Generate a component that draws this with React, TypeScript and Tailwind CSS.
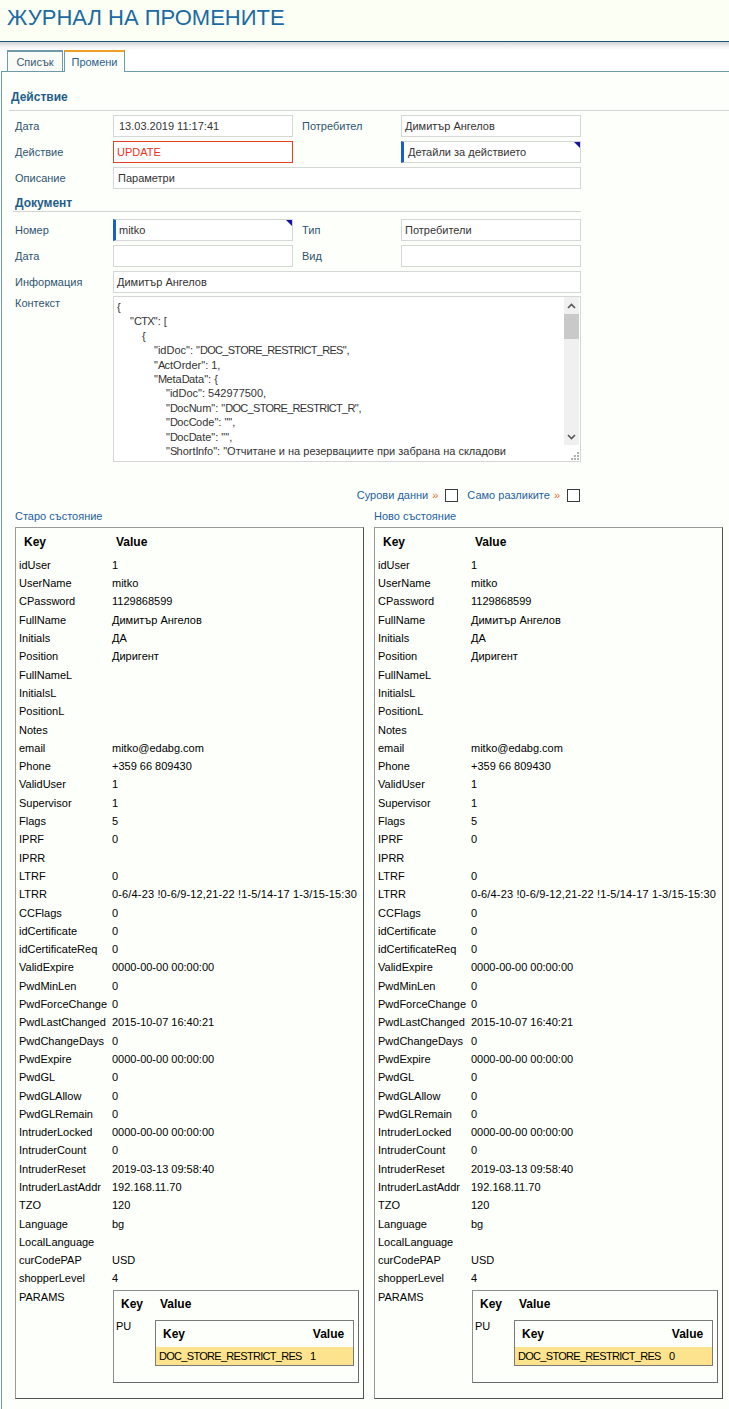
import React from 'react';

const rows: [string, string][] = [
  ['idUser', '1'],
  ['UserName', 'mitko'],
  ['CPassword', '1129868599'],
  ['FullName', 'Димитър Ангелов'],
  ['Initials', 'ДА'],
  ['Position', 'Диригент'],
  ['FullNameL', ''],
  ['InitialsL', ''],
  ['PositionL', ''],
  ['Notes', ''],
  ['email', 'mitko@edabg.com'],
  ['Phone', '+359 66 809430'],
  ['ValidUser', '1'],
  ['Supervisor', '1'],
  ['Flags', '5'],
  ['IPRF', '0'],
  ['IPRR', ''],
  ['LTRF', '0'],
  ['LTRR', '0-6/4-23 !0-6/9-12,21-22 !1-5/14-17 1-3/15-15:30'],
  ['CCFlags', '0'],
  ['idCertificate', '0'],
  ['idCertificateReq', '0'],
  ['ValidExpire', '0000-00-00 00:00:00'],
  ['PwdMinLen', '0'],
  ['PwdForceChange', '0'],
  ['PwdLastChanged', '2015-10-07 16:40:21'],
  ['PwdChangeDays', '0'],
  ['PwdExpire', '0000-00-00 00:00:00'],
  ['PwdGL', '0'],
  ['PwdGLAllow', '0'],
  ['PwdGLRemain', '0'],
  ['IntruderLocked', '0000-00-00 00:00:00'],
  ['IntruderCount', '0'],
  ['IntruderReset', '2019-03-13 09:58:40'],
  ['IntruderLastAddr', '192.168.11.70'],
  ['TZO', '120'],
  ['Language', 'bg'],
  ['LocalLanguage', ''],
  ['curCodePAP', 'USD'],
  ['shopperLevel', '4'],
];

function Caps({ children }: { children: React.ReactNode }) {
  return <span className="tracking-[-0.7px]">{children}</span>;
}

const jsonLines: [number, React.ReactNode][] = [
  [0, '{'],
  [1, <>"<Caps>CTX</Caps>": [</>],
  [2, '{'],
  [3, <>"idDoc": "<Caps>DOC_STORE_RESTRICT_RES</Caps>",</>],
  [3, <>"<Caps>A</Caps>ctOrder": 1,</>],
  [3, <>"<Caps>M</Caps>eta<Caps>D</Caps>ata": {'{'}</>],
  [4, '"idDoc": 542977500,'],
  [4, <>"<Caps>D</Caps>oc<Caps>N</Caps>um": "<Caps>DOC_STORE_RESTRICT_R</Caps>",</>],
  [4, <>"<Caps>D</Caps>oc<Caps>C</Caps>ode": "",</>],
  [4, <>"<Caps>D</Caps>oc<Caps>D</Caps>ate": "",</>],
  [4, <>"<Caps>S</Caps>hort<Caps>I</Caps>nfo": "Отчитане и на резервациите при забрана на складови</>],
];

const indentCls = ['pl-[0px]', 'pl-[13px]', 'pl-[25px]', 'pl-[37px]', 'pl-[49px]'];

function Corner() {
  return (
    <span className="absolute right-0 top-0 h-0 w-0 border-l-[6px] border-t-[6px] border-l-transparent border-t-[#1414a0]" />
  );
}

function KVBox({ val }: { val: string }) {
  return (
    <div className="border border-[#9a9a9a] border-b-[#505050] border-r-[#505050] bg-[#fdfffa] pb-[15px] text-[11px] text-black">
      <div className="flex h-[28px] items-center text-[12px] font-bold">
        <div className="w-[96px] shrink-0 pl-[8px]">Key</div>
        <div className="pl-[4px]">Value</div>
      </div>
      {rows.map(([k, v]) => (
        <div key={k} className="flex h-[18.3px] items-center">
          <div className="w-[96px] shrink-0 pl-[3px]">{k}</div>
          <div className={`whitespace-nowrap ${k === 'LTRR' ? 'tracking-[0.15px]' : ''}`}>{v}</div>
        </div>
      ))}
      <div className="flex">
        <div className="w-[96px] shrink-0 pl-[3px] leading-[18.3px]">PARAMS</div>
        <div className="ml-[1px] mr-[4px] mt-[2px] flex-1 border border-[#8c8c8c] border-b-[#6a6a6a] border-r-[#6a6a6a] pb-[16px]">
          <div className="flex h-[27px] items-center text-[12px] font-bold">
            <div className="w-[41px] shrink-0 pl-[7px]">Key</div>
            <div className="pl-[5px]">Value</div>
          </div>
          <div className="flex">
            <div className="w-[41px] shrink-0 pl-[2px] leading-[16px]">PU</div>
            <div className="mr-[4px] mt-[2px] flex-1 border border-[#7a7a7a]">
              <div className="flex h-[26px] items-center text-[12px] font-bold">
                <div className="w-[150px] shrink-0 pl-[7px]">Key</div>
                <div className="flex-1 pr-[2px] text-center">Value</div>
              </div>
              <div className="flex h-[18px] items-center bg-[#fde38e]">
                <div className="w-[150px] shrink-0 whitespace-nowrap pl-[3px] tracking-[-0.7px]">DOC_STORE_RESTRICT_RES</div>
                <div className="pl-[4px]">{val}</div>
              </div>
            </div>
          </div>
        </div>
      </div>
    </div>
  );
}

function Chevron({ up }: { up?: boolean }) {
  return (
    <svg width="9" height="6" viewBox="0 0 9 6" className="block">
      <path
        d={up ? 'M1 5 L4.5 1.5 L8 5' : 'M1 1 L4.5 4.5 L8 1'}
        fill="none"
        stroke="#555"
        strokeWidth="1.6"
      />
    </svg>
  );
}

export default function App() {
  const label = 'w-[98px] shrink-0 pt-[1px] text-[#2f5472]';
  const label2 = 'w-[108px] shrink-0 pl-[9px] pt-[1px] text-[#2f5472]';
  const input =
    'relative flex h-[22px] items-center border border-[#d6d6d6] bg-white pt-[1px] text-[#333] whitespace-nowrap overflow-hidden';
  return (
    <div className="min-h-[1409px] bg-white font-['Liberation_Sans',Arial,sans-serif] text-[11px]">
      {/* Header */}
      <div className="h-[42px] border-b border-[#1b587a] bg-[#fbfff4]">
        <h1 className="pl-[7px] pt-[5px] text-[22px] leading-[26px] text-[#1b6aa2]">ЖУРНАЛ НА ПРОМЕНИТЕ</h1>
      </div>
      <div className="h-[8px] bg-gradient-to-b from-[#d2d2d2] via-[#f0f0f0] to-white" />

      {/* Tabs */}
      <div className="flex h-[21px] items-end gap-[1px] pl-[7px]">
        <div className="flex h-[21px] w-[56px] items-center justify-center border-x border-t-2 border-[#6e9aaa] bg-[#f9fbf7] pt-[1px] text-[11px] text-[#3b5a72]">
          Списък
        </div>
        <div className="relative z-10 -mb-px flex h-[22px] w-[61px] items-center justify-center border-x border-t-2 border-x-[#6e9aaa] border-t-[#f0a024] bg-[#fdfffa] text-[11px] text-[#2a6091]">
          Промени
        </div>
      </div>

      {/* Panel */}
      <div className="ml-[1px] min-h-[1338px] border-l border-t border-[#6e9aaa] bg-[#fdfffa] pb-[12px]">
        {/* Действие */}
        <div className="ml-[7px] border-b border-[#d4d4d4] pb-[6px] pl-[2px] pt-[18px] text-[12px] font-bold leading-[14px] text-[#1f5d8a]">
          Действие
        </div>

        <div className="w-[582px] pl-[13px]">
          <div className="mt-[4px] flex h-[22px] items-center">
            <div className={label}>Дата</div>
            <div className={`${input} w-[180px] pl-[5px]`}>13.03.2019 11:17:41</div>
            <div className={label2}>Потребител</div>
            <div className={`${input} w-[180px] pl-[3px]`}>Димитър Ангелов</div>
          </div>
          <div className="mt-[4px] flex h-[22px] items-center">
            <div className={label}>Действие</div>
            <div className="flex h-[22px] w-[180px] items-center border border-[#e6401e] bg-white pl-[3px] pt-[1px] text-[#f2301a]">UPDATE</div>
            <div className="w-[108px] shrink-0" />
            <div className={`${input} w-[180px] border-l-[3px] border-l-[#1660c8] pl-[4px]`}>
              Детайли за действието
              <Corner />
            </div>
          </div>
          <div className="mt-[4px] flex h-[22px] items-center">
            <div className={label}>Описание</div>
            <div className={`${input} w-[468px] pl-[4px]`}>Параметри</div>
          </div>
        </div>

        {/* Документ */}
        <div className="ml-[11px] mt-[4px] w-[568px] border-b border-[#d4d4d4] pb-[1px] pl-[2px] pt-[3px] text-[12px] font-bold leading-[14px] text-[#1f5d8a]">
          Документ
        </div>

        <div className="w-[582px] pl-[13px]">
          <div className="mt-[7px] flex h-[22px] items-center">
            <div className={label}>Номер</div>
            <div className={`${input} w-[180px] border-l-[3px] border-l-[#1660c8] pl-[3px]`}>
              mitko
              <Corner />
            </div>
            <div className={label2}>Тип</div>
            <div className={`${input} w-[180px] pl-[3px]`}>Потребители</div>
          </div>
          <div className="mt-[4px] flex h-[22px] items-center">
            <div className={label}>Дата</div>
            <div className={`${input} w-[180px]`} />
            <div className={label2}>Вид</div>
            <div className={`${input} w-[180px]`} />
          </div>
          <div className="mt-[4px] flex h-[22px] items-center">
            <div className={label}>Информация</div>
            <div className={`${input} w-[468px] pl-[3px]`}>Димитър Ангелов</div>
          </div>
          <div className="mt-[3px] flex items-start">
            <div className="w-[98px] shrink-0 leading-[14px] text-[#2f5472]">Контекст</div>
            <div className="flex h-[166px] w-[468px] overflow-hidden border border-[#d6d6d6] bg-white">
              <div className="flex-1 overflow-hidden pl-[3px] pt-[3px] text-[11px] leading-[14.4px] text-[#333]">
                {jsonLines.map(([lvl, t], i) => (
                  <div key={i} className={`${indentCls[lvl]} whitespace-nowrap`}>
                    {t}
                  </div>
                ))}
              </div>
              <div className="mr-[1px] flex w-[15px] shrink-0 flex-col">
                <div className="flex flex-1 flex-col items-center bg-[#f0f0f0]">
                  <div className="flex h-[17px] items-center justify-center">
                    <Chevron up />
                  </div>
                  <div className="h-[25px] w-full bg-[#c9c9c9]" />
                  <div className="flex-1" />
                  <div className="flex h-[17px] items-center justify-center">
                    <Chevron />
                  </div>
                </div>
                <div className="flex h-[16px] items-end justify-end bg-white pb-[1px]">
                  <svg width="8" height="8" viewBox="0 0 8 8" className="block">
                    <rect x="6" y="0" width="2" height="2" fill="#b0b0b0" />
                    <rect x="3" y="3" width="2" height="2" fill="#b0b0b0" />
                    <rect x="6" y="3" width="2" height="2" fill="#b0b0b0" />
                    <rect x="0" y="6" width="2" height="2" fill="#b0b0b0" />
                    <rect x="3" y="6" width="2" height="2" fill="#b0b0b0" />
                    <rect x="6" y="6" width="2" height="2" fill="#b0b0b0" />
                  </svg>
                </div>
              </div>
            </div>
          </div>

          {/* Checkbox row */}
          <div className="mt-[26px] flex h-[14px] items-center justify-end pr-[4px] text-[11px] text-[#1f5f9e]">
            <span>Сурови данни</span>
            <span className="ml-[4px] text-[#f06a28]">»</span>
            <span className="ml-[7px] h-[13px] w-[13px] border border-[#3a3a3a] bg-white" />
            <span className="ml-[9px]">Само разликите</span>
            <span className="ml-[4px] text-[#f06a28]">»</span>
            <span className="ml-[7px] h-[13px] w-[13px] border border-[#3a3a3a] bg-white" />
          </div>
        </div>

        {/* State boxes */}
        <div className="mt-[7px] grid grid-cols-[349px_349px] gap-x-[10px] pl-[13px]">
          <div>
            <div className="h-[14px] text-[11px] leading-[14px] text-[#1f5f9e]">Старо състояние</div>
            <div className="mt-[4px]">
              <KVBox val="1" />
            </div>
          </div>
          <div>
            <div className="h-[14px] text-[11px] leading-[14px] text-[#1f5f9e]">Ново състояние</div>
            <div className="mt-[4px]">
              <KVBox val="0" />
            </div>
          </div>
        </div>
      </div>
    </div>
  );
}
